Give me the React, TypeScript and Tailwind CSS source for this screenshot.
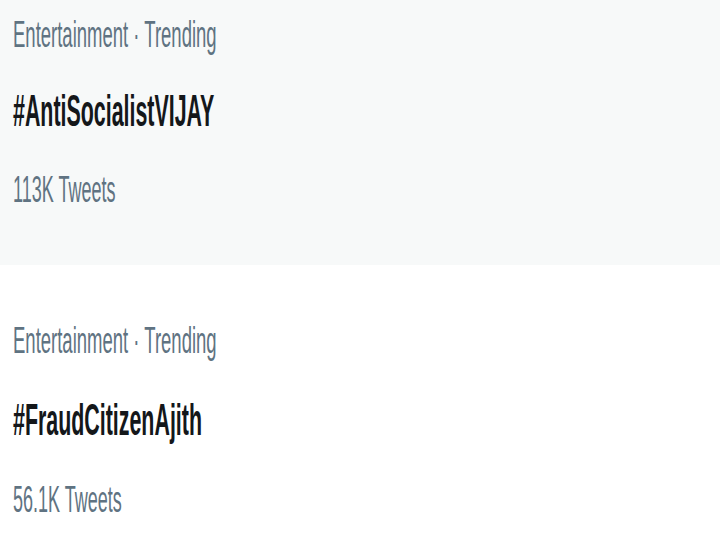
const trends = [
  { category: "Entertainment · Trending", tag: "#AntiSocialistVIJAY", count: "113K Tweets", highlighted: true },
  { category: "Entertainment · Trending", tag: "#FraudCitizenAjith", count: "56.1K Tweets", highlighted: false },
];

export default function App() {
  return (
    <div className="h-[540px] w-[720px] overflow-hidden bg-white font-['Liberation_Sans',Arial,sans-serif]">
      {/* the screenshot is stretched vertically, so scale the whole list */}
      <div className="w-[720px] origin-top-left [transform:scaleY(2.04)]">
        {trends.map((trend) => (
          <div
            key={trend.tag}
            className={
              trend.highlighted
                ? "h-[130px] bg-[#f7f9f9] px-[13px] pt-[7px] flex flex-col gap-[16px]"
                : "h-[140px] bg-white px-[13px] pt-[27px] flex flex-col gap-[17px]"
            }
          >
            <div className="text-[18.5px] leading-[20px] text-[#5f7382] whitespace-nowrap">
              {trend.category}
            </div>
            <div className="text-[21.4px] leading-[24px] font-bold text-[#14171a] whitespace-nowrap">
              {trend.tag}
            </div>
            <div className="text-[18px] leading-[20px] text-[#5f7382] whitespace-nowrap">
              {trend.count}
            </div>
          </div>
        ))}
      </div>
    </div>
  );
}
